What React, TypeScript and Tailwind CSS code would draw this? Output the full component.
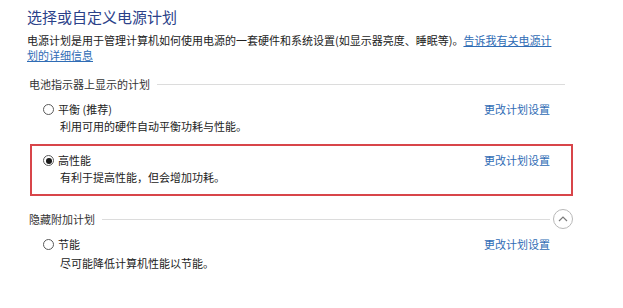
import React from "react";

const font = { fontFamily: '"Noto Sans CJK SC", "Noto Sans", sans-serif' };

function Radio({ checked }: { checked?: boolean }) {
  return (
    <span className="flex h-[11px] w-[11px] shrink-0 items-center justify-center rounded-full border border-[#5a5a5a] bg-white">
      {checked ? <span className="h-[6px] w-[6px] rounded-full bg-[#1a1a1a]" /> : null}
    </span>
  );
}

function Plan({
  name,
  desc,
  checked,
  boxed,
  className,
  descClass,
}: {
  name: string;
  desc: string;
  checked?: boolean;
  boxed?: boolean;
  className?: string;
  descClass?: string;
}) {
  return (
    <div
      className={
        "ml-[3px] w-[543px] border-2 pl-[11px] pr-[21px] " +
        (boxed ? "border-[#d8454a] pt-[6px] pb-[8px] " : "border-transparent ") +
        (className ?? "")
      }
    >
      <div className="flex h-[17px] items-center justify-between">
        <div className="flex items-center gap-[4px]">
          <Radio checked={checked} />
          <span className="text-[11px] leading-[17px] text-[#222]">{name}</span>
        </div>
        <a className="text-[11px] leading-[17px] text-[#2f6cb5]">更改计划设置</a>
      </div>
      <div className={"ml-[17px] text-[11px] leading-[17px] text-[#222] " + (descClass ?? "")}>{desc}</div>
    </div>
  );
}

export default function App() {
  return (
    <div className="h-[308px] w-[623px] bg-white pl-[27px] pt-[7px]" style={font}>
      <div className="text-[15px] leading-[20px] text-[#2b4189]">选择或自定义电源计划</div>
      <div className="mt-[6px] text-[11px] leading-[15px] text-[#222]">
        <div className="whitespace-nowrap">
          电源计划是用于管理计算机如何使用电源的一套硬件和系统设置(如显示器亮度、睡眠等)。
          <a className="text-[#2f6cb5] underline">告诉我有关电源计</a>
        </div>
        <div>
          <a className="text-[#2f6cb5] underline">划的详细信息</a>
        </div>
      </div>

      <div className="ml-[2px] mt-[13px] flex h-[16px] w-[536px] items-center">
        <span className="text-[11px] leading-[16px] text-[#333]">电池指示器上显示的计划</span>
        <span className="ml-[7px] h-px flex-1 bg-[#dcdcdc]" />
      </div>

      <Plan
        className="-mt-[2px] pt-[9px]"
        name="平衡 (推荐)"
        desc="利用可用的硬件自动平衡功耗与性能。"
      />
      <Plan
        className="mt-[7px]"
        boxed
        checked
        name="高性能"
        desc="有利于提高性能，但会增加功耗。"
      />

      <div className="ml-[2px] mt-[13px] flex h-[20px] w-[544px] items-center">
        <span className="text-[11px] leading-[16px] text-[#333]">隐藏附加计划</span>
        <span className="ml-[7px] h-px flex-1 bg-[#dcdcdc]" />
        <span className="ml-[3px] flex h-[20px] w-[20px] items-center justify-center rounded-full border border-[#b8b8b8]">
          <svg width="10" height="6" viewBox="0 0 10 6" fill="none">
            <path d="M1 5 L5 1 L9 5" stroke="#7a7a7a" strokeWidth="1.2" />
          </svg>
        </span>
      </div>

      <Plan
        className="mt-[5px]"
        name="节能"
        desc="尽可能降低计算机性能以节能。"
        descClass="mt-[2px]"
      />
    </div>
  );
}
